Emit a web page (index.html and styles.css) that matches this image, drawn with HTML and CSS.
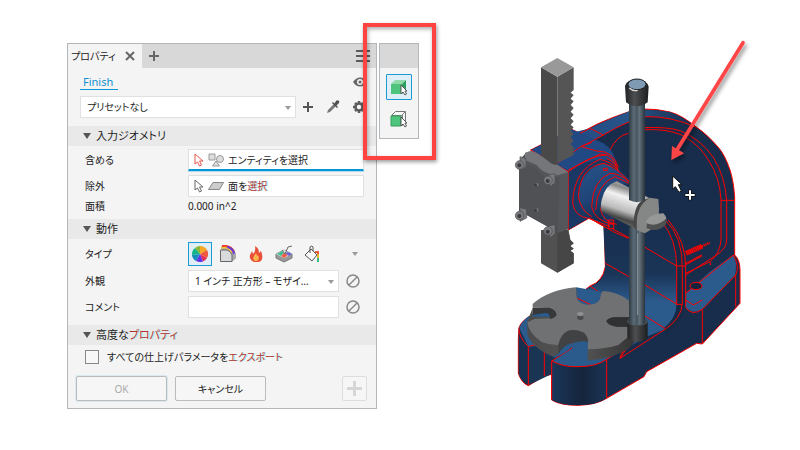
FILE: index.html
```html
<!DOCTYPE html>
<html lang="ja">
<head>
<meta charset="utf-8">
<title>プロパティ - Finish</title>
<link rel="stylesheet" href="styles.css">
</head>
<body>
<main class="stage">
  <section class="panel" aria-label="プロパティ">
    <header class="tabs">
      <div class="tab"><span>プロパティ</span>
        <button class="bare" aria-label="閉じる"><svg width="12" height="12" viewBox="0 0 12 12"><path d="M2 2l8 8M10 2l-8 8" stroke="#666" stroke-width="2"/></svg></button>
      </div>
      <button class="bare add" aria-label="追加"><svg width="12" height="12" viewBox="0 0 12 12"><path d="M6 1v10M1 6h10" stroke="#666" stroke-width="2"/></svg></button>
      <button class="bare menu" aria-label="メニュー"><svg width="14" height="12" viewBox="0 0 14 12"><path d="M0 1h14M0 6h14M0 11h14" stroke="#5c5c5c" stroke-width="2"/></svg></button>
    </header>

    <div class="title">
      <a href="#" class="name">Finish</a>
      <button class="bare" aria-label="表示"><svg width="14" height="10" viewBox="0 0 14 10"><path d="M0 5q3-4.500 7-4.500t7 4.500q-3 4.500-7 4.500T0 5z" fill="#666"/><circle cx="7" cy="5" r="3" fill="#f4f4f4"/><circle cx="7" cy="5" r="1.500" fill="#666"/></svg></button>
    </div>

    <div class="preset">
      <span class="pick"><select aria-label="プリセット"><option>プリセットなし</option></select></span>
      <button class="bare" aria-label="プリセットを追加"><svg width="12" height="12" viewBox="0 0 12 12"><path d="M6 1v10M1 6h10" stroke="#555" stroke-width="2"/></svg></button>
      <button class="bare" aria-label="スポイト"><svg width="14" height="14" viewBox="0 0 14 14"><path d="M1 13l1-3 6-6 2 2-6 6z" fill="#777"/><path d="M6 3l5 5 1-1-1.500-1.500L13 3q1-2-1-2.500Q11 0 10 1L8.500 3.500 7 2z" fill="#505050"/></svg></button>
      <button class="bare" aria-label="設定"><svg width="14" height="14" viewBox="0 0 14 14"><path d="M7 1v12M1 7h12M3 3l8 8M11 3l-8 8" stroke="#5c5c5c" stroke-width="2.500"/><circle cx="7" cy="7" r="3.500" fill="#f4f4f4" stroke="#5c5c5c" stroke-width="2.500"/></svg></button>
    </div>

    <h2 class="section">入力ジオメトリ</h2>
    <div class="rows">
      <div class="row">
        <label for="include">含める</label>
        <button id="include" class="field active">
          <svg width="10" height="16" viewBox="0 0 10 16"><path d="M1 2v10l2.500-2 2 4 2-1-2-4H9z" fill="#fff" stroke="#e8534a"/></svg>
          <svg width="16" height="16" viewBox="0 0 16 16"><g fill="#ddd" stroke="#999"><path d="M1 2h6v6H1z"/><circle cx="12" cy="7" r="3.500"/><path d="M8 9l3.500 5h-7z"/></g></svg>
          <span>エンティティを選択</span>
        </button>
      </div>
      <div class="row">
        <label for="exclude">除外</label>
        <button id="exclude" class="field">
          <svg width="10" height="16" viewBox="0 0 10 16"><path d="M1 2v10l2.500-2 2 4 2-1-2-4H9z" fill="#fff" stroke="#666"/></svg>
          <svg width="16" height="16" viewBox="0 0 16 16"><path d="M5 4.500h10.500l-4 7H.5z" fill="#ccc" stroke="#888"/></svg>
          <span>面を<span class="fringe">選択</span></span>
        </button>
      </div>
      <div class="row area"><span>面積</span><output>0.000 in^2</output></div>
    </div>

    <h2 class="section">動作</h2>
    <div class="rows">
      <div class="row types">
        <span>タイプ</span>
        <button class="type on" aria-label="外観"><svg width="18" height="18" viewBox="0 0 18 18"><path d="M9 9L9 1A8 8 0 0 1 16 5z" fill="#f7a823"/><path d="M9 9l7-4a8 8 0 0 1 0 8z" fill="#f05a3c"/><path d="M9 9l7 4a8 8 0 0 1-4 3.500z" fill="#e52e56"/><path d="M9 9l3 7.500a8 8 0 0 1-7-.5z" fill="#6433e8"/><path d="M9 9l-4 7a8 8 0 0 1-4-6z" fill="#188bbd"/><path d="M9 9l-8 1a8 8 0 0 1 3-7z" fill="#12b58a"/><path d="M9 9L4 3a8 8 0 0 1 5-2z" fill="#8db533"/></svg></button>
        <button class="type" aria-label="コーティング"><svg width="18" height="18" viewBox="0 0 18 18"><path d="M2 1.500h7q7 1 8 8v4l-4 3-2-7-9-5z" fill="#aaa"/><path d="M3 1q9-1 12 6" fill="none" stroke="#ed3a33" stroke-width="2"/><path d="M2 3Q9 1 13 8" fill="none" stroke="#ffc133" stroke-width="1.500"/><path d="M8 2q6 1 7 7" fill="none" stroke="#693bd8" stroke-width="2"/><path d="M1.500 5H8q4 1 5 5v6.500H1.500z" fill="#d9dadb" stroke="#666"/></svg></button>
        <button class="type" aria-label="熱処理"><svg width="14" height="18" viewBox="0 0 14 18"><path d="M5 17Q0 15 1 10l2-4 1 3q3-3 2-8 4 2 4 7l2-2q2 5 1 8-1 3-4 3z" fill="#e94e38"/><path d="M6 16q-3-2-1-5l2-3 1 3 1-1q2 4-1 6z" fill="#ffb64c"/></svg></button>
        <button class="type" aria-label="表面"><svg width="18" height="18" viewBox="0 0 18 18"><path d="M1 9l8-4 8 4v4l-8 4-8-4z" fill="#999" stroke="#777"/><path d="M1 9l8-4 8 4-8 4z" fill="#e6eae9"/><path d="M2 9l5-3 2 2-3 3z" fill="#3cbf92"/><path d="M6 11l3-3 4 2-4 3z" fill="#ee6046"/><path d="M10 8l3-1 4 2-3 2z" fill="#6d62d5"/><path d="M7 5l3 4 3-7 4-1" fill="none" stroke="#666"/></svg></button>
        <button class="type" aria-label="塗装"><svg width="18" height="18" viewBox="0 0 18 18"><path d="M2 10l6-6 6 6-5 6zM7 8V2q2-2 3 0v4" fill="#f7f7f7" stroke="#555"/><path d="M12 7h3v4" stroke="#eb5a39" stroke-width="2" fill="none"/><path d="M15 9v4" stroke="#e8b830" stroke-width="2"/><path d="M15 13v4" stroke="#36ba83" stroke-width="2"/></svg></button>
        <button class="bare more" aria-label="その他"><svg width="6" height="4" viewBox="0 0 6 4"><path d="M0 0h6L3 4z" fill="#999"/></svg></button>
      </div>
      <div class="row">
        <label for="look">外観</label>
        <span class="pick"><select id="look"><option>1 インチ 正方形 – モザイ…</option></select></span>
        <button class="bare clear" aria-label="外観をクリア"><svg width="14" height="14" viewBox="0 0 14 14"><circle cx="7" cy="7" r="6" fill="none" stroke="#888" stroke-width="1.500"/><path d="M3 11l8-8" stroke="#888" stroke-width="1.500"/></svg></button>
      </div>
      <div class="row">
        <label for="note">コメント</label>
        <input id="note" class="field" type="text">
        <button class="bare clear" aria-label="コメントをクリア"><svg width="14" height="14" viewBox="0 0 14 14"><circle cx="7" cy="7" r="6" fill="none" stroke="#888" stroke-width="1.500"/><path d="M3 11l8-8" stroke="#888" stroke-width="1.500"/></svg></button>
      </div>
    </div>

    <h2 class="section last"><span>高度な<span class="fringe">プロパティ</span></span></h2>
    <label class="check"><input type="checkbox"><span>すべての仕上げパラメータを<span class="fringe">エクスポート</span></span></label>
    <footer class="actions">
      <button class="btn ok" disabled>OK</button>
      <button class="btn">キャンセル</button>
      <button class="btn plus" disabled aria-label="適用して追加"><svg width="15" height="15" viewBox="0 0 15 15"><path d="M7.500 0v15M0 7.500h15" stroke="#d6d6d6" stroke-width="3"/></svg></button>
    </footer>
  </section>

  <aside class="mini">
    <div class="grip"></div>
    <button class="tool on" aria-label="ボディを選択"><svg width="18" height="18" viewBox="0 0 18 18"><path d="M1 6l4-4h11l-4 4z" fill="#8fd9aa"/><path d="M12 6l4-4v10l-4 4z" fill="#2e9f5c"/><path d="M1 6h11v10H1z" fill="#4fc47c"/><path d="M11 7v9l2-2 2 3 1.500-1-1.500-3h2z" fill="#fff" stroke="#555"/></svg></button>
    <button class="tool" aria-label="面を選択"><svg width="18" height="18" viewBox="0 0 18 18"><path d="M1.500 5.500l4-4h10v10l-3 4V5.500z" fill="#f8f8f8" stroke="#777"/><path d="M12 5l3-3" stroke="#777"/><path d="M1 6h10v10H1z" fill="#4fc47c" stroke="#359d5d"/><path d="M11 7v9l2-2 2 3 1.500-1-1.500-3h2z" fill="#fff" stroke="#555"/></svg></button>
    <div class="callout"></div>
  </aside>

  <svg class="model" viewBox="-237 -120 1137 1350" role="img" aria-label="アーバープレスの 3D モデル">
    <defs>
      <linearGradient id="rim" x1="0" x2="1"><stop offset="0" stop-color="#214a82"/><stop offset=".5" stop-color="#285488"/><stop offset="1" stop-color="#162c4b"/></linearGradient>
      <linearGradient id="throat" x1="0" y1="0" x2="0" y2="1"><stop offset="0" stop-color="#172e4e"/><stop offset=".5" stop-color="#1a3557"/><stop offset=".75" stop-color="#2b5a8c"/><stop offset="1" stop-color="#2b5a8c"/></linearGradient>
      <linearGradient id="round" x1="0" x2="1"><stop offset="0" stop-color="#1a3659"/><stop offset=".55" stop-color="#15253c"/><stop offset="1" stop-color="#1a3353"/></linearGradient>
      <linearGradient id="post" x1="0" x2="1"><stop offset="0" stop-color="#303b43"/><stop offset=".3" stop-color="#5a6b77"/><stop offset=".5" stop-color="#48555e"/><stop offset=".65" stop-color="#62717b"/><stop offset="1" stop-color="#29333b"/></linearGradient>
      <linearGradient id="steel" x1=".7" y1="0" x2=".35" y2="1"><stop offset="0" stop-color="#ddd"/><stop offset=".2" stop-color="#888"/><stop offset=".35" stop-color="#f2f2f2"/><stop offset=".6" stop-color="#bbb"/><stop offset=".75" stop-color="#444"/><stop offset="1" stop-color="#999"/></linearGradient>
      <linearGradient id="knob" x1="0" x2="1"><stop offset="0" stop-color="#202224"/><stop offset=".4" stop-color="#4c4e50"/><stop offset="1" stop-color="#1c1e20"/></linearGradient>
      <linearGradient id="hub" x1="0" y1="0" x2=".4" y2="1"><stop offset="0" stop-color="#285488"/><stop offset=".6" stop-color="#1f4478"/><stop offset="1" stop-color="#142b4c"/></linearGradient>
      <linearGradient id="side" x1="0" x2="1"><stop offset="0" stop-color="#4b4b4b"/><stop offset=".5" stop-color="#555"/><stop offset="1" stop-color="#343434"/></linearGradient>
      <filter id="soft" x="-20%" y="-20%" width="150%" height="150%"><feDropShadow dx="6" dy="9" stdDeviation="6" flood-opacity=".45"/></filter>
    </defs>

    <!-- frame casting -->
    <path d="M704 645V470Q700 420 690 390 675 345 655 322 620 282 590 262 545 225 510 216 470 206 430 207 385 212 340 232 290 250 240 280L215 268 92 330 205 395V570L268 534 313 560 316 680Q308 725 270 738L235 765 95 825Q60 845 57 865L55 895V1000Q65 1030 85 1037L133 1008 155 1003V1080Q180 1096 235 1096 290 1094 320 1075L432 1010 440 995 590 910 607 912 720 790V690Q720 660 704 645Z" fill="#172d4b" stroke="#f00" stroke-width="3"/>
    <path d="M185 375L245 318 190 285 270 265Q340 232 390 213 430 204 510 216 545 228 590 262 510 226 440 231 385 240 310 285L245 320Z" fill="url(#rim)"/>
    <path d="M92 330L215 268 310 310Q345 330 350 380L205 395Z" fill="#214983"/>
    <path d="M310 560Q350 590 385 592L495 540Q530 590 530 678V795Q528 835 490 866L390 850 235 760 275 738Q312 725 316 680Z" fill="url(#throat)"/>
    <path d="M495 540Q550 590 555 690V800Q545 850 500 880L490 865Q530 840 530 795V678Q528 590 480 540Z" fill="#162a46"/>
    <path d="M205 395Q270 350 330 360L390 420 330 560 268 534 205 570Z" fill="#1a3863"/>
    <path d="M235 475Q240 390 310 370 350 380 388 425L310 460Q295 510 310 545 245 540 235 475Z" fill="url(#hub)"/>
    <path d="M557 760L630 695 700 645Q713 665 705 705L607 808Q580 825 557 802Z" fill="#2b5a8c"/>
    <path d="M57 865Q65 840 100 820L390 810 495 868 440 890 320 958Q290 982 235 980 190 980 155 963L215 920H85Q60 900 57 865Z" fill="#2b5a8c"/>
    <path d="M56 860L85 920V1035Q62 1025 56 1000Z" fill="#17304f"/>
    <path d="M85 920L170 915 215 925 155 963V1002L85 1036Z" fill="#1a3453"/>
    <path d="M155 963Q190 982 235 980 290 980 320 958V1075Q290 1096 235 1096 180 1096 155 1080Z" fill="url(#round)"/>

    <!-- highlighted edges -->
    <g fill="none" stroke="#f00" stroke-width="3">
      <path d="M270 265L310 285M240 280L270 265M245 320L310 285Q385 240 440 230 510 228 590 262M245 320L290 333Q340 332 355 382M92 330L205 395V570M205 395Q270 345 320 345M172 370L245 318 275 308"/>
      <path d="M330 330Q350 288 385 280M435 263Q500 260 540 272 600 296 640 352 675 410 680 480V600Q680 625 650 645L557 705M435 269Q500 266 545 285 600 315 625 360 660 412 663 480V600Q660 640 630 665L557 700M663 481H704"/>
      <path d="M205 390L300 342Q340 340 353 390M320 355Q350 370 355 395M218 490Q220 390 300 358 330 365 350 385M235 470Q240 380 312 370 355 385 387 425M275 500Q278 420 330 400 360 400 387 425M287 510Q290 430 345 410L387 430M302 510Q310 440 355 425M218 490Q225 530 265 535L300 548 330 560M235 470Q242 510 275 530M275 500Q285 545 340 552M302 510Q310 545 350 553M268 534L340 575 385 595M325 540h16v25h-16zM325 552h16M310 385h12v6h-12z"/>
      <path d="M495 540Q550 590 547 690V790Q545 835 495 868M505 540Q560 605 557 690V800M485 543Q530 600 530 678V795M530 678H557M530 793H547M316 670L387 710M435 735L530 792M335 565L387 593M435 622L530 678M270 738L310 765M235 765L275 793M435 828L495 865M495 868L360 955 365 940 435 870M360 955L390 910M557 760L700 645M557 780L580 795 607 780M557 802Q575 830 607 808L707 705V800M607 808V910M700 645Q720 680 707 705M630 665L632 675"/>
      <path d="M57 865Q55 890 85 920V1035M133 915V1008M155 963V1080M155 963Q190 982 235 980 290 980 320 958V1075M155 963L215 925V910M320 958L440 880M85 920L120 910"/>
      <ellipse cx="588" cy="738" rx="18" ry="11" fill="#12243c"/>
      <path d="M558 640L606 619" stroke-width="15" stroke-dasharray="5 1"/>
      <path d="M600 622L629 608" stroke-width="7" stroke-dasharray="4 2"/>
      <path d="M557 672L606 646" stroke-width="7" stroke-dasharray="5 1"/>
    </g>

    <!-- slotted table -->
    <path d="M228 742L228 780Q240 797 270 797 300 793 305 755Z" fill="#2b5a8c"/>
    <path d="M228 742L232 782 242 790 215 795Z" fill="#414243"/>
    <path d="M228 773L272 794" stroke="#f00" stroke-width="3"/>
    <path d="M82 845V885Q102 928 160 950L175 942Q178 915 215 908L240 895 262 925V962Q340 957 388 925L408 900V830H98V803Z" fill="url(#side)"/>
    <path d="M175 942Q180 925 212 908L218 915Q215 930 165 953L158 950Z" fill="#2b5a8c"/>
    <path d="M228 742Q145 750 98 792V803L140 802Q168 808 170 825 160 838 105 836L82 847Q84 878 125 906 150 916 175 915 182 882 205 872 228 866 252 878 268 895 262 928 320 927 355 915L385 890V860H350Q322 855 319 843 328 830 352 832H390L387 782Q355 756 310 753 303 755 300 777 290 796 260 794 232 790 230 770Z" fill="#707172"/>
    <path d="M98 803L140 802Q168 808 170 825 162 837 148 836 154 824 140 818L98 825Z" fill="#37383a"/>
    <path d="M319 843Q328 830 352 832H390V860H350Q322 855 319 843Z" fill="#303133"/>
    <path d="M175 915Q182 882 205 872 228 866 252 878 268 895 264 912 240 904 212 910 185 920 175 942Z" fill="#414243"/>
    <path d="M264 905Q235 900 215 912L218 925 262 960Z" fill="#2b5a8c"/>
    <path d="M232 822v15q9 6 18 0v-15z" fill="#4c4c4c"/><ellipse cx="241" cy="822" rx="10" ry="6" fill="#8f9091"/>

    <!-- rack bar -->
    <path d="M123 570V670L172 698 221 670V640L211 632 221 626 211 618 221 610 211 600 205 570Z" fill="#515151"/>
    <path d="M172 570H205L211 600 221 610 211 618 221 626 211 632 221 640V670L172 698Z" fill="#464646"/>
    <path d="M123 82L172 110V390L123 345Z" fill="#494949"/>
    <path d="M172 110L221 82V150L212 158 221 165 212 176 221 184 212 195 221 204 212 215 221 224 212 235 221 244 212 254 221 262 212 273 221 282 212 292 221 302 212 312 221 322V345L172 370Z" fill="#555"/>
    <path d="M172 54L221 82 172 110 123 82Z" fill="#999"/>

    <!-- cover plate -->
    <path d="M57 365Q75 335 93 333L130 350Q150 375 172 375L205 397V568L175 578 57 512Z" fill="#54565b"/>
    <path d="M75 338Q95 328 112 340L140 360Q155 376 172 374L205 397 185 402Q170 410 150 402 125 395 110 375L75 360Z" fill="#74767a"/>
    <path d="M57 380L88 375Q110 380 120 400 145 422 178 410L174 575 57 512Z" fill="#505154"/>
    <g fill="#77797d" stroke="#4b4c4f" stroke-width="2">
      <path d="M60 350l18 6v25l-18 9zM145 405l20-4v27l-15 12zM60 503l20 5v26l-20 10zM145 558l20-4v27l-15 12z"/>
      <circle cx="59" cy="375" r="13"/><circle cx="144" cy="421" r="13"/><circle cx="59" cy="527" r="13"/><circle cx="144" cy="573" r="13"/>
      <circle cx="111" cy="434" r="6"/><circle cx="111" cy="510" r="6"/>
    </g>
    <g fill="#3a3b3d"><circle cx="58" cy="376" r="6"/><circle cx="143" cy="423" r="6"/><circle cx="58" cy="528" r="6"/><circle cx="143" cy="575" r="6"/><circle cx="107" cy="435" r="4"/><circle cx="107" cy="511" r="4"/></g>

    <!-- post, shaft and lever -->
    <path d="M387 560H435V855Q410 870 387 855Z" fill="url(#post)"/><path d="M413 580V855" stroke="#b4bbc0" stroke-width="2"/>
    <path d="M382 845Q412 865 443 845V893Q412 918 382 893Z" fill="url(#knob)"/><ellipse cx="412" cy="845" rx="31" ry="13" fill="#464b4f"/><path d="M387 825H435V850Q410 862 387 850Z" fill="url(#post)"/>
    <path d="M305 480Q315 435 350 424L470 485 430 578 305 515Q300 500 305 480Z" fill="url(#steel)"/>
    <path d="M410 570Q405 500 450 473L475 477 477 505L475 555 435 580Z" fill="#858686"/>
    <path d="M410 570Q405 500 450 473L430 480Q402 490 400 560Z" fill="#484848"/>
    <path d="M440 540Q455 520 490 520 505 535 495 550 465 573 438 555Z" fill="#969797"/><path d="M440 550Q470 563 500 535L498 553Q475 580 440 565Z" fill="#505152"/>
    <path d="M387 190H435V480Q411 493 387 480Z" fill="url(#post)"/>
    <path d="M375 138Q380 118 411 117 440 119 446 140L443 187Q411 211 378 187Z" fill="url(#knob)"/>
    <ellipse cx="411" cy="133" rx="27" ry="16" fill="#7f9bb4" stroke="#202224" stroke-width="3"/><path d="M388 144q10 10 25 7" stroke="#ddd" stroke-width="4" fill="none"/>

    <!-- pointer and arrow -->
    <path d="M518 408V447L526 440 537 457 544 453 535 434H546Z" fill="#fff" stroke="#111" stroke-width="3"/>
    <path d="M570 449V481M554 465H586" stroke="#111" stroke-width="11"/><path d="M570 451V479M556 465H584" stroke="#fff" stroke-width="6"/>
    <g filter="url(#soft)"><path d="M729 8L532 328" stroke="#ff4545" stroke-width="11" stroke-linecap="round"/><path d="M514 360L516 318 552 340Z" fill="#ff4545"/></g>
  </svg>
</main>
</body>
</html>
```
FILE: styles.css
```css
* { box-sizing: border-box; }

body {
  margin: 0;
  background: #fff;
  color: #222;
  font: 10px/16px "Noto Sans", "Noto Sans CJK JP", sans-serif;
  font-feature-settings: "palt";
}

button, input, select { font: inherit; font-feature-settings: inherit; color: inherit; margin: 0; }
svg { display: block; flex: none; }

.stage {
  display: grid;
  grid-template-columns: minmax(290px, 310fr) 40px minmax(200px, 379fr);
  column-gap: 2px;
  align-items: start;
  padding-left: 67px;
}

.panel, .mini { margin-top: 43px; border: 1px solid #b4b7b9; background: #f4f4f4; }

.bare { display: grid; place-items: center; padding: 0; border: 0; background: none; }

.tabs { display: flex; align-items: center; height: 24px; background: #d8d8d8; }
.tab {
  display: flex;
  align-items: center;
  justify-content: space-between;
  width: 74px;
  height: 24px;
  padding: 0 6px 0 3px;
  background: #f4f4f4;
  white-space: nowrap;
}
.add { margin-left: 6px; }
.menu { margin-left: auto; margin-right: 6px; }

.title { display: flex; align-items: center; justify-content: space-between; height: 28px; padding: 0 9px 0 12px; }
.name {
  padding: 0 5px 0 3px;
  border-bottom: 1px solid #0696d7;
  color: #0e8fd0;
  font-size: 11px;
  line-height: 15px;
  text-decoration: none;
}

.preset { display: flex; align-items: center; gap: 12px; padding: 0 10px 0 12px; margin-bottom: 8px; }
.preset .pick { margin-right: -6px; }

.pick { position: relative; flex: 1; min-width: 0; }
.pick::after {
  content: "";
  position: absolute;
  right: 5px;
  top: 10px;
  border: 3px solid transparent;
  border-top: 4px solid #999;
  border-bottom: 0;
  pointer-events: none;
}
.pick select, .field {
  display: flex;
  align-items: center;
  width: 100%;
  height: 22px;
  padding: 0 6px;
  border: 1px solid #e0e0e0;
  border-radius: 0;
  background: #fff;
  appearance: none;
}
.field { flex: 1; min-width: 0; gap: 4px; padding: 0 5px; text-align: left; white-space: nowrap; }
.field.active { border-bottom: 2px solid #0696d7; box-shadow: 0 1px #b5dcee; }

.section {
  display: flex;
  align-items: center;
  gap: 5px;
  height: 20px;
  margin: 0;
  padding-left: 15px;
  background: #e9e9e9;
  font-size: 11px;
  font-weight: 400;
}
.section::before { content: ""; border: 4px solid transparent; border-top: 6px solid #555; border-bottom: 0; }

.rows { display: flex; flex-direction: column; gap: 4px; padding: 3px 12px 0 17px; }
.row { display: flex; align-items: center; min-height: 22px; }
.row > :first-child { flex: 0 0 103px; }
.row.area { min-height: 18px; margin: -4px 0 4px; }
.row.types { min-height: 24px; gap: 4px; }
.row.types > :first-child { flex-basis: 99px; }
.clear { margin: 0 4px 0 7px; }

.type {
  display: grid;
  place-items: center;
  width: 24px;
  height: 24px;
  padding: 0;
  border: 1px solid transparent;
  background: none;
}
.type.on, .tool.on { border-color: #1a9ad6; background: #e0eff7; }
.more { margin: 0 6px 0 auto; }

.last { margin-top: 7px; }
.check { display: flex; align-items: center; gap: 8px; height: 14px; margin: 5px 0 12px 17px; }
.check input { width: 14px; height: 14px; border: 1px solid #888; background: #f7f7f7; appearance: none; }

.fringe { color: #b5312f; text-shadow: 1px 0 #8ff4f5; }

.actions { display: flex; gap: 8px; padding: 0 9px 7px 8px; }
.btn {
  display: grid;
  place-items: center;
  width: 91px;
  height: 25px;
  padding: 0;
  border: 1px solid #bbb;
  border-radius: 2px;
  background: #f6f6f6;
}
.btn.ok { color: #aaa; box-shadow: 0 0 0 1px #d8e9f1; }
.btn.plus { width: 25px; margin-left: auto; border-color: #ddd; }

.mini { position: relative; display: flex; flex-direction: column; align-items: center; gap: 6px; padding-bottom: 6px; }
.grip { width: 100%; height: 24px; background: #d8d8d8; }
.tool { display: grid; place-items: center; width: 26px; height: 26px; padding: 0; border: 1px solid transparent; border-radius: 1px; background: none; }
.callout {
  position: absolute;
  left: -17px;
  top: -21px;
  width: 73px;
  height: 137px;
  border: 4px solid #ff4343;
  box-shadow: 1px 2px 4px #0006, inset 1px 2px 4px #0005;
  pointer-events: none;
}

.model { width: 100%; height: auto; }
```
